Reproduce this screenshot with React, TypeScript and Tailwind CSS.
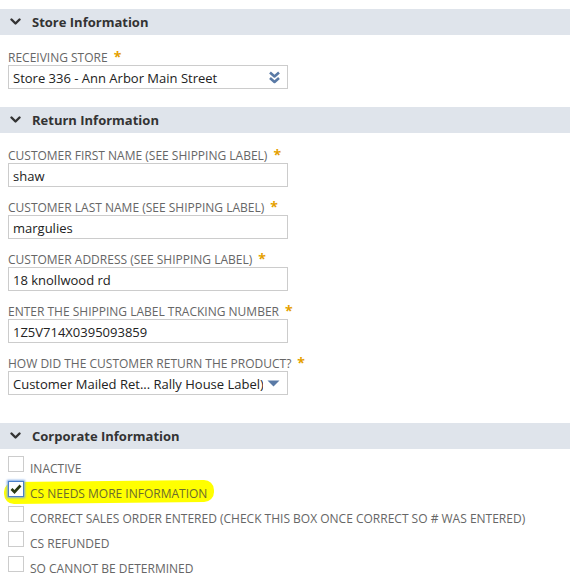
import { ReactNode } from "react";

function Chevron() {
  return (
    <svg width="11" height="8" viewBox="0 0 11 8" className="shrink-0">
      <path d="M1.5 1.5 L5.5 5.5 L9.5 1.5" fill="none" stroke="#333" strokeWidth="2.4" strokeLinecap="round" strokeLinejoin="round" />
    </svg>
  );
}

function SectionHeader({ title }: { title: string }) {
  return (
    <div className="h-[26px] bg-[#dfe4eb] flex items-center pl-[10px] gap-[11px]">
      <Chevron />
      <span className="text-[13px] font-bold text-[#333] leading-none">{title}</span>
    </div>
  );
}

function Label({ text }: { text: string }) {
  return (
    <div className="h-[16px] leading-[19px] text-[12px] text-[#666] mb-[2px] whitespace-nowrap">
      {text}
      <span className="text-[#e5a000] font-bold text-[14px] ml-[6px]">*</span>
    </div>
  );
}

function TextBox({ value }: { value: string }) {
  return (
    <div className="w-[280px] h-[24px] border border-[#ccc] bg-white flex items-center pt-[3px] px-[4px] text-[13px] text-[#222]">
      {value}
    </div>
  );
}

function Field({ label, children }: { label: string; children: ReactNode }) {
  return (
    <div>
      <Label text={label} />
      {children}
    </div>
  );
}

function DoubleChevron() {
  return (
    <svg width="13" height="13" viewBox="0 0 13 13">
      <path d="M2 1.5 L6.5 5.5 L11 1.5" fill="none" stroke="#5a7aa6" strokeWidth="2.6" strokeLinejoin="round" />
      <path d="M2 7 L6.5 11 L11 7" fill="none" stroke="#5a7aa6" strokeWidth="2.6" strokeLinejoin="round" />
    </svg>
  );
}

function Triangle() {
  return (
    <svg width="13" height="7" viewBox="0 0 13 7">
      <path d="M0.5 0.5 L12.5 0.5 L6.5 6.5 Z" fill="#5a7aa6" />
    </svg>
  );
}

function Check({ label, checked }: { label: string; checked?: boolean }) {
  return (
    <div className="relative h-[25px] flex items-start gap-[6px] pl-[8px]">
      {checked && (
        <div className="absolute left-[4px] top-[0px] w-[210px] h-[22px] bg-[#ffff00] rounded-[10px] -rotate-[0.6deg]" />
      )}
      <div
        className={
          checked
            ? "relative w-[16px] h-[16px] border border-[#4a7fc9] bg-white shadow-[0_0_2px_1px_#7aa7e6] flex items-center justify-center"
            : "relative w-[16px] h-[16px] border border-[#ccc] bg-white"
        }
      >
        {checked && (
          <svg width="12" height="10" viewBox="0 0 12 10">
            <path d="M1.5 5 L4.5 8 L10.5 1.5" fill="none" stroke="#2b3a10" strokeWidth="2.6" />
          </svg>
        )}
      </div>
      <span className={"relative mt-[5px] leading-[16px] text-[12px] whitespace-nowrap " + (checked ? "text-[#6b6b2e]" : "text-[#666]")}>
        {label}
      </span>
    </div>
  );
}

export default function App() {
  return (
    <div className="w-[570px] h-[582px] overflow-hidden bg-white pt-[9px] font-['Open_Sans',sans-serif]">
      <SectionHeader title="Store Information" />
      <div className="px-[8px] pt-[12px] pb-[18px]">
        <Field label="RECEIVING STORE">
          <div className="w-[280px] h-[24px] border border-[#ccc] bg-white flex items-center justify-between pl-[4px] pr-[6px] text-[13px] text-[#222]">
            <span className="pt-[3px]">Store 336 - Ann Arbor Main Street</span>
            <DoubleChevron />
          </div>
        </Field>
      </div>

      <SectionHeader title="Return Information" />
      <div className="px-[8px] pt-[12px] pb-[28px] flex flex-col gap-[10px]">
        <Field label="CUSTOMER FIRST NAME (SEE SHIPPING LABEL)">
          <TextBox value="shaw" />
        </Field>
        <Field label="CUSTOMER LAST NAME (SEE SHIPPING LABEL)">
          <TextBox value="margulies" />
        </Field>
        <Field label="CUSTOMER ADDRESS (SEE SHIPPING LABEL)">
          <TextBox value="18 knollwood rd" />
        </Field>
        <Field label="ENTER THE SHIPPING LABEL TRACKING NUMBER">
          <TextBox value="1Z5V714X0395093859" />
        </Field>
        <Field label="HOW DID THE CUSTOMER RETURN THE PRODUCT?">
          <div className="w-[280px] h-[24px] border border-[#ccc] bg-white flex items-center pl-[4px] pr-[7px] text-[13px] text-[#222]">
            <span className="w-[250px] pt-[3px] overflow-hidden whitespace-nowrap">Customer Mailed Ret... Rally House Label)</span>
            <span className="ml-auto flex items-center">
              <Triangle />
            </span>
          </div>
        </Field>
      </div>

      <SectionHeader title="Corporate Information" />
      <div className="pt-[7px]">
        <Check label="INACTIVE" />
        <Check label="CS NEEDS MORE INFORMATION" checked />
        <Check label="CORRECT SALES ORDER ENTERED (CHECK THIS BOX ONCE CORRECT SO # WAS ENTERED)" />
        <Check label="CS REFUNDED" />
        <Check label="SO CANNOT BE DETERMINED" />
      </div>
    </div>
  );
}
